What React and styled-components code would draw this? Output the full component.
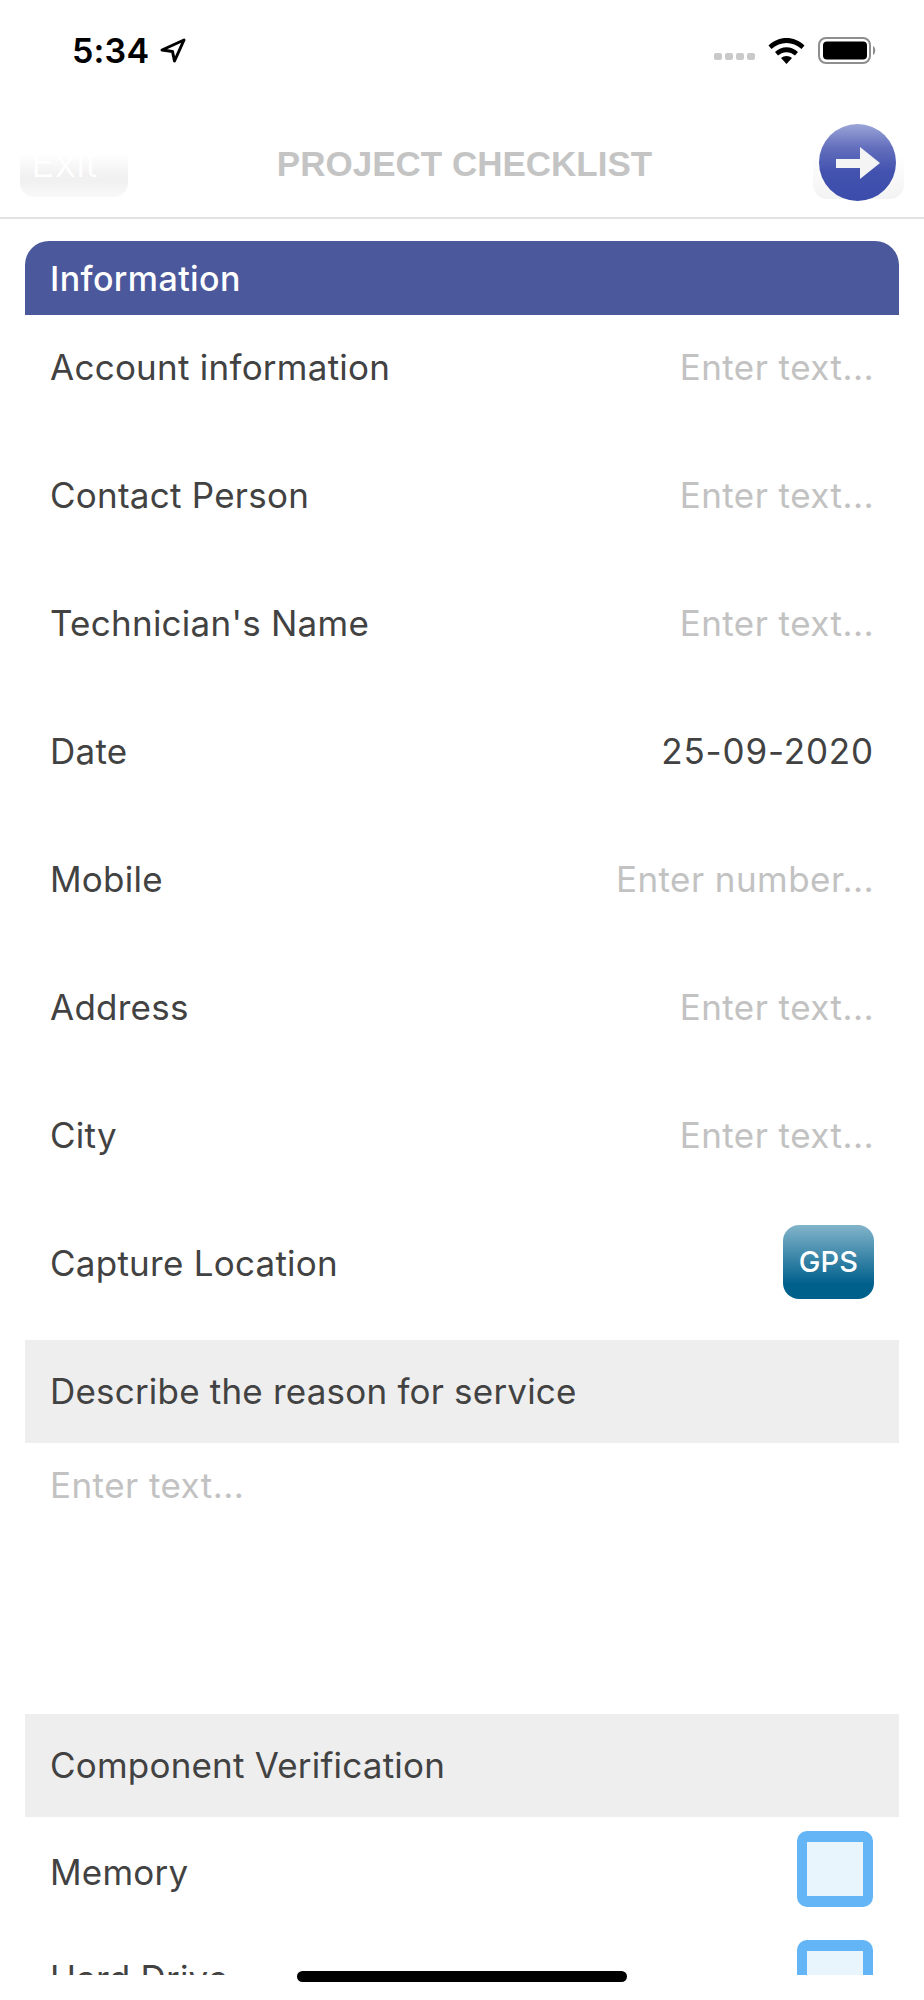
import React from 'react'
import styled, { createGlobalStyle } from 'styled-components'

const GlobalStyle = createGlobalStyle`
    html, body {
        margin: 0;
        padding: 0;
        background: #fff;
        font-family: Inter, "Noto Sans", sans-serif;
    }
`

const Screen = styled.div`
    position: relative;
    width: 924px;
    height: 2000px;
    display: flex;
    flex-direction: column;
    background: #fff;
    overflow: hidden;
`

const StatusBar = styled.div`
    height: 100px;
    flex: none;
    box-sizing: border-box;
    padding: 30px 46px 0 72px;
    display: flex;
    align-items: flex-start;
    justify-content: space-between;
`

const Time = styled.div`
    display: flex;
    align-items: center;
    gap: 11px;
    height: 40px;
    font-size: 34px;
    font-weight: 600;
    letter-spacing: 0.2px;
    color: #000;
`

const StatusIcons = styled.div`
    display: flex;
    align-items: center;
    gap: 13px;
    height: 40px;
`

const SignalDots = styled.div`
    display: flex;
    gap: 3px;
    margin-top: 13px;
`

const SignalDot = styled.span`
    width: 8px;
    height: 7px;
    border-radius: 2px;
    background: #c9c9c9;
`

const NavBar = styled.header`
    height: 119px;
    flex: none;
    box-sizing: border-box;
    border-bottom: 2px solid #e2e2e2;
    padding: 55px 20px 0;
    display: grid;
    grid-template-columns: 108px 1fr 91px;
    align-items: start;
`

const ExitButton = styled.div`
    height: 43px;
    border-radius: 0 0 14px 14px;
    background: linear-gradient(#ffffff 0%, #f1f1f1 50%, #f1f1f1 65%, #f9f9f9 100%);
    overflow: hidden;
    padding-left: 11px;
    font-size: 40px;
    font-weight: 300;
    line-height: 40px;
    color: #fff;
    margin-top: -1px;
`

const ExitLabel = styled.div`
    margin-top: -11px;
`

const Title = styled.h1`
    margin: -12px 12px 0 0;
    text-align: center;
    font-family: "Liberation Sans", Arial, sans-serif;
    font-size: 35px;
    line-height: 42px;
    font-weight: 700;
    color: #c4c4c4;
`

const NextPlate = styled.div`
    position: relative;
    height: 44px;
    border-radius: 0 0 14px 14px;
    background: linear-gradient(#ffffff, #f3f3f3);
`

const NextCircle = styled.div`
    position: absolute;
    left: 6px;
    top: -31px;
    width: 77px;
    height: 77px;
    border-radius: 50%;
    background: linear-gradient(#9ba5d8 0%, #6470bd 30%, #4252ae 62%, #3c4cab 100%);
    display: flex;
    align-items: center;
    justify-content: center;
`

const Content = styled.main`
    flex: 1;
    min-height: 0;
    padding: 22px 25px 0;
    display: flex;
    flex-direction: column;
    overflow: hidden;
    margin-bottom: 25px;
`

const SectionHeader = styled.div`
    flex: none;
    height: 74px;
    box-sizing: border-box;
    padding: 0 25px;
    display: flex;
    align-items: center;
    border-radius: 24px 24px 0 0;
    background: #4b589c;
    color: #fff;
    font-size: 34px;
    font-weight: 500;
    letter-spacing: 0.4px;
`

const RowList = styled.div`
    flex: none;
    display: flex;
    flex-direction: column;
    gap: 24px;
    margin-bottom: 25px;
`

const Row = styled.div`
    flex: none;
    height: 104px;
    box-sizing: border-box;
    padding: 0 25px;
    display: flex;
    align-items: center;
    justify-content: space-between;
    font-size: 35px;
    letter-spacing: 0.25px;
    color: #424242;
`

const Value = styled.span`
    color: ${props => (props.$placeholder ? '#c2c2c2' : '#424242')};
    letter-spacing: ${props => (props.$placeholder ? '0.45px' : '0.85px')};
`

const GpsButton = styled.div`
    width: 91px;
    height: 74px;
    margin-bottom: 3px;
    border-radius: 16px;
    background: linear-gradient(#82b4ca 0%, #00608c 80%);
    color: #fff;
    font-size: 29px;
    font-weight: 500;
    letter-spacing: 0.2px;
    display: flex;
    align-items: center;
    justify-content: center;
`

const GrayBand = styled.div`
    flex: none;
    height: 103px;
    box-sizing: border-box;
    padding: 0 25px 1px;
    display: flex;
    align-items: center;
    background: #eeeeee;
    font-size: 35px;
    letter-spacing: 0.2px;
    color: #424242;
`

const TextArea = styled.div`
    flex: none;
    height: 271px;
    box-sizing: border-box;
    padding: 21px 25px 0;
    font-size: 35px;
    line-height: 42px;
    letter-spacing: 0.45px;
    color: #c2c2c2;
`

const CheckList = styled.div`
    display: flex;
    flex-direction: column;
    gap: 33px;
    padding-top: 14px;
`

const CheckRow = styled.div`
    flex: none;
    height: 76px;
    padding: 0 26px 0 25px;
    display: flex;
    align-items: center;
    justify-content: space-between;
    font-size: 35px;
    letter-spacing: 0.2px;
    color: #424242;
`

const CheckLabel = styled.span`
    margin-top: ${props => props.$drop}px;
`

const CheckBox = styled.span`
    width: 76px;
    height: 76px;
    box-sizing: border-box;
    border: 11px solid #64b5f6;
    border-left-width: 10px;
    border-right-width: 10px;
    border-radius: 10px;
    background: #e8f5fc;
`

const HomeIndicator = styled.div`
    position: absolute;
    left: 297px;
    top: 1971px;
    width: 330px;
    height: 11px;
    border-radius: 6px;
    background: #000;
`

const infoRows = [
    ['Account information', 'Enter text...', true],
    ['Contact Person', 'Enter text...', true],
    ["Technician's Name", 'Enter text...', true],
    ['Date', '25-09-2020', false],
    ['Mobile', 'Enter number...', true],
    ['Address', 'Enter text...', true],
    ['City', 'Enter text...', true],
]

const LocationIcon = () => (
    <svg width="26" height="25" viewBox="0 0 26 25" fill="none">
        <path d="M2 12 L24 2 L14.5 23 L12.5 13.5 Z" stroke="#000" strokeWidth="3" strokeLinejoin="round" />
    </svg>
)

const WifiIcon = () => (
    <svg width="37" height="27" viewBox="0 0 37 27">
        <path d="M0.5 8.5 C10.5 -1.5 26.5 -1.5 36.5 8.5 L33.5 12 C25 4 12 4 3.5 12 Z" fill="#000" />
        <path d="M7 15 C13.5 8.5 23.5 8.5 30 15 L27 18.5 C22 14 15 14 10 18.5 Z" fill="#000" />
        <path d="M13 21 C16 18.3 21 18.3 24 21 L18.5 27 Z" fill="#000" />
    </svg>
)

const BatteryIcon = () => (
    <svg width="60" height="27" viewBox="0 0 60 27">
        <rect x="1" y="1" width="51" height="25" rx="7" fill="none" stroke="#8e8e8e" strokeWidth="2" />
        <rect x="5" y="4.5" width="44" height="18" rx="4" fill="#000" />
        <path d="M55 9 C58 10 58 17 55 18 Z" fill="#8e8e8e" />
    </svg>
)

const ArrowIcon = () => (
    <svg width="44" height="32" viewBox="0 0 44 32">
        <path d="M0 12 H24 V0 L44 16 L24 32 V21 H0 Z" fill="#f4f4f4" />
    </svg>
)

export default function App() {
    return (
        <Screen>
            <GlobalStyle />
            <StatusBar>
                <Time>
                    5:34
                    <LocationIcon />
                </Time>
                <StatusIcons>
                    <SignalDots>
                        <SignalDot />
                        <SignalDot />
                        <SignalDot />
                        <SignalDot />
                    </SignalDots>
                    <WifiIcon />
                    <BatteryIcon />
                </StatusIcons>
            </StatusBar>
            <NavBar>
                <ExitButton>
                    <ExitLabel>Exit</ExitLabel>
                </ExitButton>
                <Title>PROJECT CHECKLIST</Title>
                <NextPlate>
                    <NextCircle>
                        <ArrowIcon />
                    </NextCircle>
                </NextPlate>
            </NavBar>
            <Content>
                <SectionHeader>Information</SectionHeader>
                <RowList>
                    {infoRows.map(([label, value, placeholder]) => (
                        <Row key={label}>
                            {label}
                            <Value $placeholder={placeholder}>{value}</Value>
                        </Row>
                    ))}
                    <Row>
                        Capture Location
                        <GpsButton>GPS</GpsButton>
                    </Row>
                </RowList>
                <GrayBand>Describe the reason for service</GrayBand>
                <TextArea>Enter text...</TextArea>
                <GrayBand>Component Verification</GrayBand>
                <CheckList>
                    <CheckRow>
                        <CheckLabel $drop={5}>Memory</CheckLabel>
                        <CheckBox />
                    </CheckRow>
                    <CheckRow>
                        <CheckLabel $drop={0}>Hard Drive</CheckLabel>
                        <CheckBox />
                    </CheckRow>
                </CheckList>
            </Content>
            <HomeIndicator />
        </Screen>
    )
}
